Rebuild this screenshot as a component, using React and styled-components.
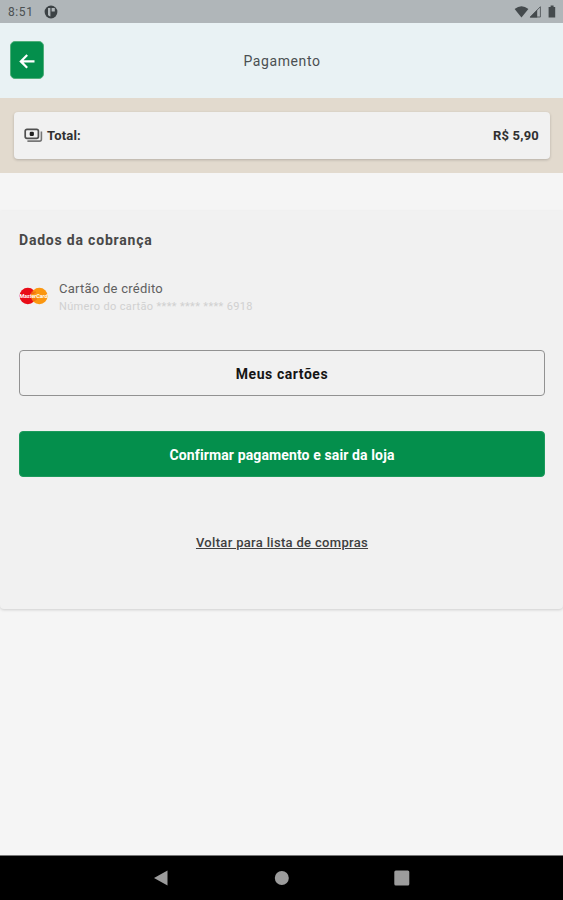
import React from 'react'
import styled, { createGlobalStyle } from 'styled-components'

const GlobalStyle = createGlobalStyle`
  * {
    box-sizing: border-box;
  }
  body {
    margin: 0;
    background-color: #f5f5f5;
    font-family: Roboto, 'Liberation Sans', sans-serif;
  }
`

const Tela = styled.div`
  display: flex;
  flex-direction: column;
  height: 900px;
  overflow: hidden;
`

const StatusBar = styled.div`
  display: flex;
  justify-content: space-between;
  align-items: center;
  height: 23px;
  padding: 1px 6px 0 8px;
  background-color: #b0b6b9;
  color: #4a5052;
  font-size: 12px;
  letter-spacing: 0.6px;

  div {
    display: flex;
    align-items: center;
  }
  svg {
    display: block;
  }
`

const Hora = styled.span`
  width: 36px;
`

const Header = styled.header`
  display: grid;
  grid-template-columns: 34px 1fr 34px;
  align-items: center;
  height: 75px;
  padding: 0 9px 0 10px;
  background-color: #e9f2f4;
`

const BotaoVoltar = styled.button`
  display: flex;
  align-items: center;
  justify-content: center;
  width: 34px;
  height: 38px;
  margin-bottom: 1px;
  padding: 1px 0 0;
  border: 1px solid #4fae79;
  border-radius: 5px;
  background-color: #048f4c;
`

const Titulo = styled.h1`
  margin: 0;
  color: #4b5052;
  font-size: 14px;
  font-weight: 400;
  letter-spacing: 0.6px;
  text-align: center;
`

const FaixaTotal = styled.section`
  height: 75px;
  padding: 14px 13px 14px 14px;
  background-color: #e2dace;
`

const CartaoTotal = styled.div`
  display: flex;
  align-items: center;
  height: 47px;
  padding: 0 11px 0 10px;
  border-radius: 4px;
  background-color: #f1f1f1;
  box-shadow: 0 1px 3px rgba(0, 0, 0, 0.2);
  color: #303030;
  font-size: 13px;
  font-weight: 700;
  letter-spacing: 0.2px;

  svg {
    margin-right: 4px;
  }
`

const Valor = styled.span`
  margin-left: auto;
`

const Cobranca = styled.main`
  height: 398px;
  margin-top: 38px;
  padding: 20px 18px 0 19px;
  border-radius: 0 0 4px 4px;
  background-color: #f1f1f1;
  box-shadow: 0 1px 3px rgba(0, 0, 0, 0.16);
`

const Subtitulo = styled.h2`
  margin: 0;
  color: #484848;
  font-size: 14px;
  font-weight: 700;
  line-height: 18px;
  letter-spacing: 0.8px;
`

const FormaPagamento = styled.div`
  display: flex;
  align-items: center;
  gap: 10px;
  height: 36px;
  margin-top: 30px;

  svg {
    margin-bottom: 2px;
  }
`

const Dados = styled.div`
  p {
    margin: 0;
    color: #606060;
    font-size: 13px;
    line-height: 18px;
    letter-spacing: 0.25px;
  }
  p:nth-child(2) {
    color: #d0d0d0;
    font-size: 11px;
    line-height: 17px;
    letter-spacing: 0.35px;
  }
`

const Botao = styled.button`
  display: block;
  width: 100%;
  height: 46px;
  margin-top: ${props => props.$topo}px;
  padding: 1px 0 0;
  border: ${props => (props.$primario ? '1px solid #1c9a5c' : '1px solid #929292')};
  border-radius: 4px;
  background-color: ${props => (props.$primario ? '#048f4c' : 'transparent')};
  color: ${props => (props.$primario ? '#ffffff' : '#151515')};
  font-family: inherit;
  font-size: 14px;
  font-weight: 700;
  letter-spacing: ${props => (props.$primario ? 0.12 : 0.55)}px;
`

const LinkLista = styled.a`
  display: block;
  margin-top: 57px;
  color: #404040;
  font-size: 13px;
  font-weight: 500;
  line-height: 18px;
  letter-spacing: 0.32px;
  text-align: center;
  text-decoration: underline;
`

const NavBar = styled.nav`
  display: flex;
  align-items: center;
  justify-content: center;
  gap: 104px;
  height: 45px;
  margin-top: auto;
  border-top: 1px solid #777777;
  background-color: #000000;
`

const IconeNotas = () => (
  <svg width="19" height="15" viewBox="0 0 19 15" fill="none">
    <rect x="1.2" y="1.3" width="13.2" height="9" rx="1.8" stroke="#505050" strokeWidth="1.7" />
    <rect x="5.7" y="3.7" width="4.2" height="4.2" rx="1.2" fill="#202020" />
    <path d="M17.4 3.6v7.6c0 1.1-.7 1.9-1.8 1.9H3.4" stroke="#777777" strokeWidth="1.6" />
  </svg>
)

const LogoMastercard = () => (
  <svg width="30" height="18" viewBox="0 0 30 18">
    <circle cx="8.8" cy="9" r="8.3" fill="#e90c17" />
    <circle cx="20.3" cy="9" r="8.3" fill="#fb9710" />
    <path d="M12 5.2h5M11.5 6.5h4M13 12h5M13.5 13.4h3" stroke="#ef5a18" strokeWidth="0.8" />
    <text
      x="14.5"
      y="11.2"
      textAnchor="middle"
      textLength="28"
      lengthAdjust="spacingAndGlyphs"
      fill="#ffffff"
      fontFamily="Roboto, sans-serif"
      fontSize="6"
      fontWeight="700"
      fontStyle="italic"
    >
      MasterCard
    </text>
  </svg>
)

const App = () => {
  return (
    <>
      <GlobalStyle />
      <Tela>
        <StatusBar>
          <div>
            <Hora>8:51</Hora>
            <svg width="14" height="14" viewBox="0 0 14 14">
              <circle cx="7" cy="7" r="6.4" fill="#3c4245" />
              <path d="M4 3H6.4V11.4A4.6 4.6 0 0 1 4 10zM7.6 3H10.8V6.4H7.6z" fill="#b0b6b9" />
            </svg>
          </div>
          <div>
            <svg width="43" height="14" viewBox="0 0 43 14">
              <path d="M0.6 3.9Q7.5-1.2 14.4 3.9L7.5 12.4z" fill="#444a4d" />
              <path d="M26.4 1.7V12H16.2z" fill="none" stroke="#5a6063" strokeWidth="1" />
              <path d="M23.2 4.7V12.4H15.7z" fill="#444a4d" />
              <path d="M36.6 0.6h3v1.3h1.6v10.7h-6.6V1.9h2z" fill="#444a4d" />
            </svg>
          </div>
        </StatusBar>

        <Header>
          <BotaoVoltar aria-label="Voltar">
            <svg width="18" height="16" viewBox="0 0 18 16" fill="none" stroke="#ffffff" strokeWidth="2.2">
              <path d="M16.5 8.4H3.6M9.2 2L2.8 8.4L9.2 14.8" />
            </svg>
          </BotaoVoltar>
          <Titulo>Pagamento</Titulo>
        </Header>

        <FaixaTotal>
          <CartaoTotal>
            <IconeNotas />
            <span>Total:</span>
            <Valor>R$ 5,90</Valor>
          </CartaoTotal>
        </FaixaTotal>

        <Cobranca>
          <Subtitulo>Dados da cobrança</Subtitulo>
          <FormaPagamento>
            <LogoMastercard />
            <Dados>
              <p>Cartão de crédito</p>
              <p>Número do cartão **** **** **** 6918</p>
            </Dados>
          </FormaPagamento>
          <Botao $topo={35}>Meus cartões</Botao>
          <Botao $topo={35} $primario>Confirmar pagamento e sair da loja</Botao>
          <LinkLista>Voltar para lista de compras</LinkLista>
        </Cobranca>

        <NavBar>
          <svg width="16" height="16" viewBox="0 0 16 16">
            <path d="M0 8L13.5 0.5V15.5z" fill="#9c9c9c" />
          </svg>
          <svg width="16" height="16" viewBox="0 0 16 16">
            <circle cx="7.8" cy="8" r="7" fill="#9c9c9c" />
          </svg>
          <svg width="16" height="16" viewBox="0 0 16 16">
            <rect x="0.3" y="0.5" width="15" height="15" rx="1.5" fill="#9c9c9c" />
          </svg>
        </NavBar>
      </Tela>
    </>
  )
}

export default App
